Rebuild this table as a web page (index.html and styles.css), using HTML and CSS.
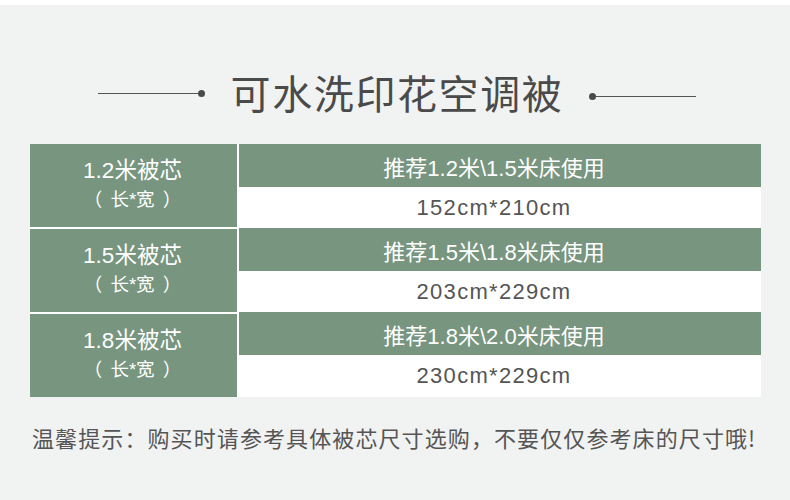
FILE: index.html
```html
<!DOCTYPE html>
<html lang="zh">
<head>
<meta charset="utf-8">
<link rel="stylesheet" href="styles.css">
</head>
<body>
<div class="strip"></div>
<main class="page">
  <header class="title">
    <div class="deco deco-left"><span class="line"></span><span class="dot"></span></div>
    <h1>可水洗印花空调被</h1>
    <div class="deco deco-right"><span class="dot"></span><span class="line"></span></div>
  </header>
  <section class="table">
    <div class="col-left">
      <div class="name"><span class="n1">1.2米被芯</span><span class="n2">（ 长*宽 ）</span></div>
      <div class="name"><span class="n1">1.5米被芯</span><span class="n2">（ 长*宽 ）</span></div>
      <div class="name"><span class="n1">1.8米被芯</span><span class="n2">（ 长*宽 ）</span></div>
    </div>
    <div class="col-right">
      <div class="rec">推荐1.2米\1.5米床使用</div>
      <div class="size">152cm*210cm</div>
      <div class="rec">推荐1.5米\1.8米床使用</div>
      <div class="size">203cm*229cm</div>
      <div class="rec">推荐1.8米\2.0米床使用</div>
      <div class="size last">230cm*229cm</div>
    </div>
  </section>
  <p class="tip">温馨提示：购买时请参考具体被芯尺寸选购，不要仅仅参考床的尺寸哦!</p>
</main>
</body>
</html>
```
FILE: styles.css
```css
html, body {
  margin: 0;
  padding: 0;
  background: #f1f3f2;
}
body {
  width: 790px;
  height: 500px;
  overflow: hidden;
  font-family: "Liberation Sans", "Noto Sans CJK SC", sans-serif;
}
.strip {
  height: 5px;
  background: #ffffff;
}
.page {
  display: flex;
  flex-direction: column;
}
.title {
  height: 139px;
  box-sizing: border-box;
  padding: 40px 0 0 4px;
  display: flex;
  align-items: center;
  justify-content: center;
}
.title h1 {
  margin: 0;
  font-family: "Noto Sans CJK SC", sans-serif;
  font-weight: 400;
  font-size: 40px;
  letter-spacing: 1.6px;
  color: #4a4a4a;
  line-height: 1;
  padding: 0 26px 6px 26px;
}
.deco {
  display: flex;
  align-items: center;
}
.deco-left { margin-top: -2px; }
.deco-right { margin-top: 4px; }
.line {
  width: 100px;
  height: 1px;
  background: #555555;
}
.dot {
  width: 7px;
  height: 7px;
  border-radius: 50%;
  background: #4a4a4a;
}
.table {
  margin-left: 30px;
  width: 731px;
  display: flex;
  gap: 2px;
  background: #ffffff;
}
.col-left {
  width: 207px;
  display: flex;
  flex-direction: column;
  gap: 2px;
}
.name {
  height: 83px;
  background: #77957f;
  color: #ffffff;
  display: flex;
  flex-direction: column;
  align-items: center;
  justify-content: center;
  padding-bottom: 1px;
  box-sizing: border-box;
}
.n1 {
  font-size: 22.5px;
  line-height: 29px;
  padding-right: 2px;
}
.n2 {
  font-family: "Liberation Sans", "Noto Sans CJK SC", sans-serif;
  font-size: 18.5px;
  line-height: 29px;
  word-spacing: 3px;
  padding-right: 2px;
}
.col-right {
  flex: 1;
  display: flex;
  flex-direction: column;
}
.rec {
  height: 43px;
  background: #77957f;
  color: #ffffff;
  font-size: 22px;
  display: flex;
  align-items: center;
  justify-content: center;
  padding-right: 12px;
}
.size {
  height: 41px;
  background: #ffffff;
  color: #555555;
  font-size: 22px;
  letter-spacing: 1.3px;
  display: flex;
  align-items: center;
  justify-content: center;
  padding-right: 12px;
}
.size.last { height: 42px; }
.tip {
  margin: 25px 0 0 32px;
  font-family: "Noto Sans CJK SC", sans-serif;
  font-size: 22px;
  letter-spacing: 1.1px;
  color: #555555;
  line-height: 30px;
}
```
